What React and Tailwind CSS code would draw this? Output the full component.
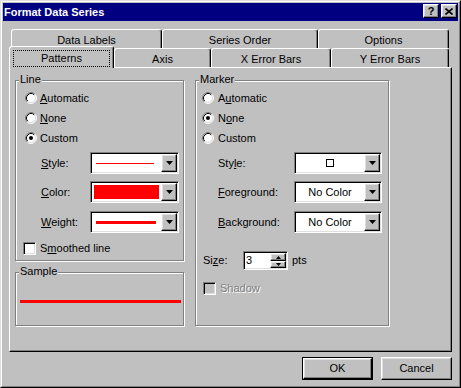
import React from 'react';

const FONT = "font-['Liberation_Sans',Arial,sans-serif]";

// classic 3D edges
const raised =
  'border border-t-white border-l-white border-r-black border-b-black shadow-[inset_-1px_-1px_0_#808080,inset_1px_1px_0_#dfdfdf]';
const sunken =
  'border border-t-[#808080] border-l-[#808080] border-r-white border-b-white shadow-[inset_1px_1px_0_#000,inset_-1px_-1px_0_#dfdfdf]';
const etched = 'relative border border-[#808080] shadow-[inset_1px_1px_0_#fff,1px_1px_0_#fff]';

const Radio = ({ checked }) => (
  <svg width="12" height="12" viewBox="0 0 12 12" className="shrink-0">
    <circle cx="6" cy="6" r="5" fill="#fff" />
    <path d="M9.89 2.11A5.5 5.5 0 0 0 2.11 9.89" fill="none" stroke="#808080" />
    <path d="M9.89 2.11A5.5 5.5 0 0 1 2.11 9.89" fill="none" stroke="#fff" />
    <path d="M9.18 2.82A4.5 4.5 0 0 0 2.82 9.18" fill="none" stroke="#000" />
    <path d="M9.18 2.82A4.5 4.5 0 0 1 2.82 9.18" fill="none" stroke="#dfdfdf" />
    {checked && <circle cx="6" cy="6" r="2" fill="#000" />}
  </svg>
);

const Check = ({ disabled }) => (
  <div className={`w-[13px] h-[13px] shrink-0 ${sunken} ${disabled ? 'bg-[#c0c0c0]' : 'bg-white'}`} />
);

const Arrow = () => (
  <svg width="7" height="4" viewBox="0 0 7 4">
    <path d="M0 0h7L3.5 4z" fill="#000" />
  </svg>
);

const Combo = ({ w, children }) => (
  <div className={`${w} h-[22px] flex bg-white p-[1px] ${sunken}`}>
    <div className="flex-1 flex items-center justify-center">{children}</div>
    <div className={`w-[16px] h-full bg-[#c0c0c0] flex items-center justify-center ${raised}`}>
      <Arrow />
    </div>
  </div>
);

const Group = ({ label, className, children }) => (
  <div className={`${etched} ${className}`}>
    <span className="absolute left-[3px] -top-[8px] px-[1px] bg-[#c0c0c0] leading-[13px]">{label}</span>
    {children}
  </div>
);

const Tab = ({ w, selected, children }) => (
  <div
    className={`${w} ${
      selected ? 'h-[22px] -mt-[2px] relative z-10 pt-[3px] items-start' : 'h-full pt-[2px] items-center'
    } bg-[#c0c0c0] flex justify-center border-t border-l border-r border-t-white border-l-white border-r-black rounded-t-[3px] shadow-[inset_-1px_0_0_#808080]`}
  >
    {children}
  </div>
);

const TitleBtn = ({ children }) => (
  <div className={`w-[16px] h-[14px] bg-[#c0c0c0] flex items-center justify-center ${raised}`}>{children}</div>
);

const Button = ({ children, isDefault }) =>
  isDefault ? (
    <div className="w-[71px] h-[23px] border border-black">
      <div className={`w-full h-full bg-[#c0c0c0] flex items-center justify-center ${raised}`}>{children}</div>
    </div>
  ) : (
    <div className={`w-[71px] h-[23px] bg-[#c0c0c0] flex items-center justify-center ${raised}`}>{children}</div>
  );

export default function App() {
  return (
    <div
      className={`w-[461px] h-[388px] bg-[#c0c0c0] border border-t-[#dfdfdf] border-l-[#dfdfdf] border-r-black border-b-black ${FONT} text-[11px] text-black`}
    >
      <div className="h-full border border-t-white border-l-white border-r-[#808080] border-b-[#808080] p-[1px] flex flex-col">
        {/* Title bar */}
        <div className="h-[18px] bg-[#000080] flex items-center pl-[1px] pr-[1px]">
          <span className="text-white font-bold text-[11px]">Format Data Series</span>
          <div className="ml-auto flex gap-[2px] self-start mt-[1px]">
            <TitleBtn>
              <span className="font-bold text-[11px] leading-none">?</span>
            </TitleBtn>
            <TitleBtn>
              <svg width="8" height="7" viewBox="0 0 8 7">
                <path d="M0.5 0.5L7.5 6.5M7.5 0.5L0.5 6.5" stroke="#000" strokeWidth="1.6" />
              </svg>
            </TitleBtn>
          </div>
        </div>

        <div className="px-[6px] pt-[8px] flex flex-col">
          {/* Tabs: back row */}
          <div className="flex h-[19px] pl-[2px]">
            <Tab w="w-[151px]">Data Labels</Tab>
            <Tab w="w-[156px]">Series Order</Tab>
            <Tab w="w-[131px]">Options</Tab>
          </div>
          {/* Tabs: front row */}
          <div className="flex h-[19px]">
            <Tab w="w-[105px]" selected>
              <div className="w-[97px] h-[17px] border border-dotted border-black flex items-center justify-center">
                Patterns
              </div>
            </Tab>
            <Tab w="w-[97px]">Axis</Tab>
            <Tab w="w-[120px]">X Error Bars</Tab>
            <Tab w="w-[118px]">Y Error Bars</Tab>
          </div>

          {/* Panel */}
          <div className="h-[285px] flex pl-[5px] pt-[12px] border border-t-white border-l-white border-r-black border-b-black shadow-[inset_-1px_-1px_0_#808080]">
            <div className="w-[180px] flex flex-col">
              <Group label="Line" className="w-[169px] h-[181px] flex flex-col">
                <div className="mt-[7px]">
                  <div className="h-[20px] flex items-center pl-[9px] gap-[3px]">
                    <Radio />
                    <span>
                      <u>A</u>utomatic
                    </span>
                  </div>
                  <div className="h-[20px] flex items-center pl-[9px] gap-[3px]">
                    <Radio />
                    <span>
                      <u>N</u>one
                    </span>
                  </div>
                  <div className="h-[20px] flex items-center pl-[9px] gap-[3px]">
                    <Radio checked />
                    <span>Custom</span>
                  </div>
                </div>
                <div className="mt-[4px] flex items-center pl-[25px]">
                  <span className="w-[49px]">
                    <u>S</u>tyle:
                  </span>
                  <Combo w="w-[89px]">
                    <div className="w-[58px] h-[1px] bg-[#ff0000] -ml-[3px]" />
                  </Combo>
                </div>
                <div className="mt-[7px] flex items-center pl-[25px]">
                  <span className="w-[49px]">
                    <u>C</u>olor:
                  </span>
                  <Combo w="w-[89px]">
                    <div className="w-[65px] h-[14px] bg-[#ff0000] -ml-[1px]" />
                  </Combo>
                </div>
                <div className="mt-[8px] flex items-center pl-[25px]">
                  <span className="w-[49px]">
                    <u>W</u>eight:
                  </span>
                  <Combo w="w-[89px]">
                    <div className="w-[60px] h-[3px] bg-[#ff0000] -ml-[2px]" />
                  </Combo>
                </div>
                <div className="mt-[5px] h-[20px] flex items-center pl-[7px] gap-[4px]">
                  <Check />
                  <span>
                    S<u>m</u>oothed line
                  </span>
                </div>
              </Group>

              <Group label="Sample" className="mt-[11px] w-[169px] h-[54px]">
                <div className="mt-[27px] ml-[4px] w-[161px] h-[3px] bg-[#ff0000]" />
              </Group>
            </div>

            <Group label="Marker" className="w-[194px] h-[246px] flex flex-col">
              <div className="mt-[7px]">
                <div className="h-[20px] flex items-center pl-[6px] gap-[4px]">
                  <Radio />
                  <span>
                    A<u>u</u>tomatic
                  </span>
                </div>
                <div className="h-[20px] flex items-center pl-[6px] gap-[4px]">
                  <Radio checked />
                  <span>
                    N<u>o</u>ne
                  </span>
                </div>
                <div className="h-[20px] flex items-center pl-[6px] gap-[4px]">
                  <Radio />
                  <span>Custom</span>
                </div>
              </div>
              <div className="mt-[4px] flex items-center pl-[22px]">
                <span className="w-[76px]">
                  Sty<u>l</u>e:
                </span>
                <Combo w="w-[88px]">
                  <div className="w-[8px] h-[8px] border border-black -mt-[1px]" />
                </Combo>
              </div>
              <div className="mt-[7px] flex items-center pl-[22px]">
                <span className="w-[76px]">
                  <u>F</u>oreground:
                </span>
                <Combo w="w-[88px]">No Color</Combo>
              </div>
              <div className="mt-[8px] flex items-center pl-[22px]">
                <span className="w-[76px]">
                  <u>B</u>ackground:
                </span>
                <Combo w="w-[88px]">No Color</Combo>
              </div>
              <div className="mt-[18px] h-[19px] flex items-center pl-[7px]">
                <span className="w-[40px]">
                  Si<u>z</u>e:
                </span>
                <div className={`w-[45px] h-[19px] flex bg-white p-[1px] ${sunken}`}>
                  <div className="flex-1 pl-[1px] leading-[15px]">3</div>
                  <div className="w-[16px] flex flex-col">
                    <div className={`h-[8px] bg-[#c0c0c0] flex items-center justify-center ${raised}`}>
                      <svg width="5" height="3" viewBox="0 0 5 3">
                        <path d="M2.5 0L5 3H0z" fill="#000" />
                      </svg>
                    </div>
                    <div className={`h-[7px] bg-[#c0c0c0] flex items-center justify-center ${raised}`}>
                      <svg width="5" height="3" viewBox="0 0 5 3">
                        <path d="M0 0h5L2.5 3z" fill="#000" />
                      </svg>
                    </div>
                  </div>
                </div>
                <span className="ml-[4px]">pts</span>
              </div>
              <div className="mt-[8px] h-[20px] flex items-center pl-[7px] gap-[4px]">
                <Check disabled />
                <span className="text-[#808080] [text-shadow:1px_1px_0_#fff]">Shadow</span>
              </div>
            </Group>
          </div>

          {/* Buttons */}
          <div className="mt-[5px] flex justify-end gap-[8px]">
            <Button isDefault>OK</Button>
            <Button>Cancel</Button>
          </div>
        </div>
      </div>
    </div>
  );
}
